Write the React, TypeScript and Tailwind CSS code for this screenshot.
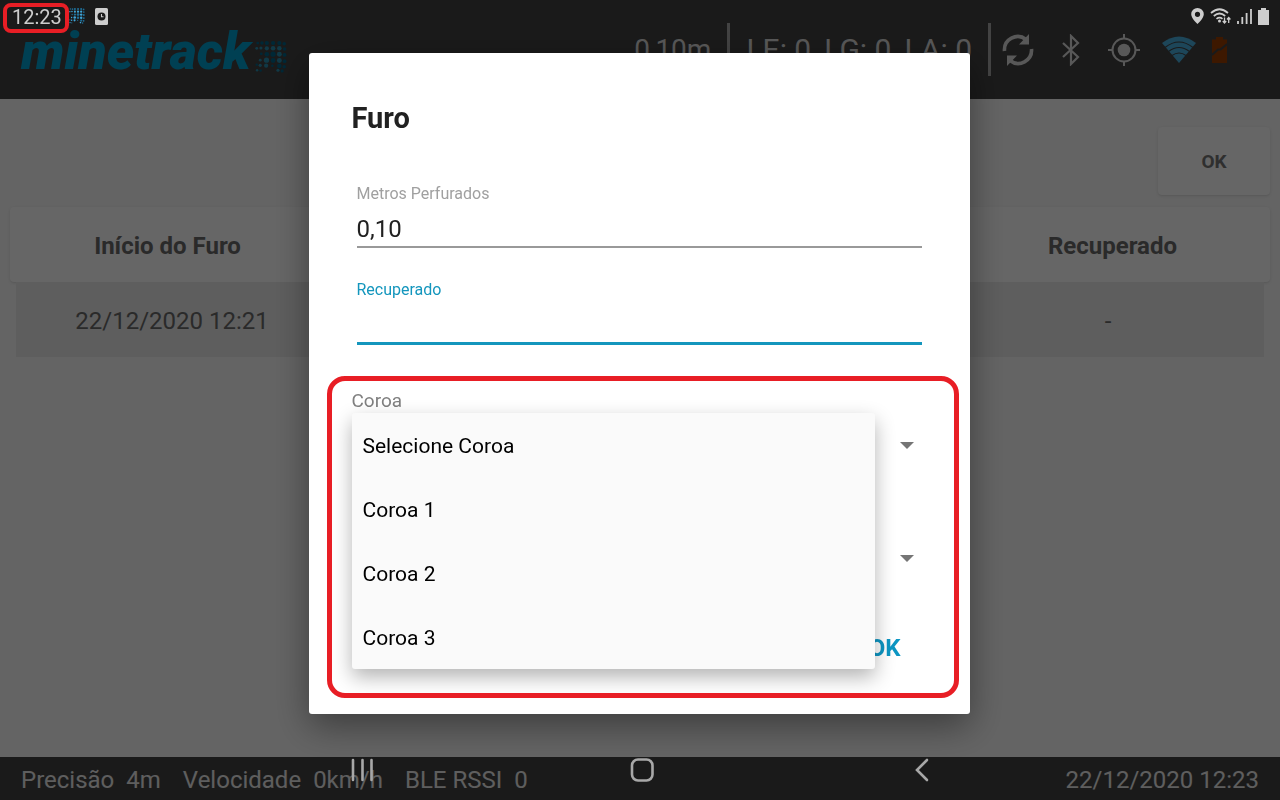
import React from 'react';

// x, y, radius, brightness
const DOTS: [number, number, number, number][] = [
  [8, 6, 4, 0], [20, 6, 5, 0], [34, 6, 6, 0], [52, 6, 6, 0], [70, 6, 6, 0], [84, 8, 5, 0],
  [5, 21, 4, 1], [17, 20, 4.5, 1], [34, 21, 6, 1], [52, 21, 6.5, 1], [70, 21, 6.5, 1], [85, 23, 5, 0],
  [18, 37, 4, 0], [34, 38, 6.5, 0], [52, 38, 7.5, 0], [70, 38, 7, 1], [85, 40, 5.5, 0],
  [15, 55, 4, 1], [33, 55, 7.5, 1], [52, 56, 7, 0], [70, 56, 7, 1], [85, 58, 5.5, 0],
  [5, 68, 3.5, 0], [15, 70, 4.5, 1], [32, 71, 6, 1], [50, 71, 3.5, 0], [70, 72, 6.5, 0], [84, 74, 5, 0],
  [6, 84, 3.5, 1], [16, 85, 3.5, 0], [66, 84, 4.5, 1], [78, 86, 4.5, 0],
];

const DotArrow: React.FC<{ className: string; fill: string; accent: string }> = ({ className, fill, accent }) => (
  <svg viewBox="0 0 92 92" className={className} aria-hidden="true">
    {DOTS.map(([x, y, r, bright]) => (
      <circle key={`${x}-${y}`} cx={x} cy={y} r={r} fill={bright ? accent : fill} />
    ))}
  </svg>
);

const StatusBar = () => (
  <div className="fixed inset-x-0 top-0 z-40 flex h-8 items-center justify-between pl-3 pr-[11px] text-[#cdcdcd]">
    <div className="flex items-center">
      <time className="pt-0.5 text-[20px] leading-6">12:23</time>
      <DotArrow className="ml-[7px] h-4 w-4" fill="#1f6f98" accent="#3fa5d8" />
      <svg viewBox="0 0 13 17" className="ml-2.5 h-[17px] w-[13px]" aria-hidden="true">
        <rect width="13" height="17" rx="1.5" fill="currentColor" />
        <circle cx="6.5" cy="8.5" r="4" fill="#1a1a1a" />
        <path d="M6.5 6v2.7h2" fill="none" stroke="#cdcdcd" strokeWidth="1.1" />
      </svg>
    </div>
    <div className="flex items-center">
      <svg viewBox="0 0 13 16" className="h-4 w-[13px]" aria-hidden="true">
        <path
          fill="currentColor"
          fillRule="evenodd"
          d="M6.5 0A6.3 6.3 0 0 0 .2 6.3C.2 10.5 6.500 16 6.5 16S12.800 10.5 12.8 6.3A6.3 6.3 0 0 0 6.5 0zm0 3.700a2.600 2.600 0 1 1 0 5.200 2.600 2.600 0 0 1 0-5.200z"
        />
      </svg>
      <svg viewBox="0 0 22 18" className="ml-1.5 h-[18px] w-[22px]" aria-hidden="true">
        <g fill="none" stroke="currentColor" strokeWidth="1.7">
          <path d="M1 6Q9.5-1.5 18 6" />
          <path d="M3.8 9Q9.5 4 15.2 9" />
          <path d="M6.5 11.8Q9.5 9.5 12.5 11.8" />
        </g>
        <circle cx="9.5" cy="14" r="1.5" fill="currentColor" />
        <path d="M14.5 10.5v5M12.8 14l1.700 2 1.700-2M18.700 16v-5M17 12.500l1.700-2 1.700 2" fill="none" stroke="currentColor" strokeWidth="1.3" />
      </svg>
      <svg viewBox="0 0 15 16" className="ml-[5px] h-4 w-[15px]" aria-hidden="true">
        <path d="M1 16v-3M5.300 16V9M9.600 16V5M14 16V1" stroke="currentColor" strokeWidth="1.8" />
      </svg>
      <svg viewBox="0 0 11 17" className="ml-1.5 h-[17px] w-[11px]" aria-hidden="true">
        <path d="M3 0h5v2h3v15H0V2h3z" fill="currentColor" />
      </svg>
    </div>
  </div>
);

const SyncIcon = () => (
  <svg viewBox="0 0 32 32" className="h-8 w-8" aria-hidden="true">
    <g fill="none" stroke="currentColor" strokeWidth="3.6">
      <path d="M2.500 17A13.300 13.300 0 0 1 24 5.500" />
      <path d="M29.500 15A13.300 13.300 0 0 1 8 26.500" />
    </g>
    <path d="M27 0v10.500H17z M5 32V21.500h10z" fill="currentColor" />
  </svg>
);

const BluetoothIcon = () => (
  <svg viewBox="0 0 18 32" className="h-8 w-[18px]" aria-hidden="true">
    <path d="M1 9l15 14-7 7V2l7 7L1 23" fill="none" stroke="currentColor" strokeWidth="2.2" />
  </svg>
);

const LocateIcon = () => (
  <svg viewBox="0 0 32 32" className="h-8 w-8" aria-hidden="true">
    <circle cx="16" cy="16" r="11.5" fill="none" stroke="currentColor" strokeWidth="2" />
    <circle cx="16" cy="16" r="6.3" fill="currentColor" />
    <path d="M16 0v5M16 27v5M0 16h5M27 16h5" stroke="currentColor" strokeWidth="2" />
  </svg>
);

const WifiIcon = () => (
  <svg viewBox="0 0 34 27" className="h-[27px] w-[34px]" aria-hidden="true">
    <path d="M17 27L0 7Q17-6 34 7z" fill="#4aaede" />
    <g fill="none" stroke="#424242" strokeWidth="1.1">
      <path d="M3 11.500Q17 .5 31 11.500" />
      <path d="M6.500 15.500Q17 7.500 27.500 15.500" />
      <path d="M10 19.500Q17 14.500 24 19.500" />
    </g>
  </svg>
);

const BatteryOffIcon = () => (
  <svg viewBox="0 0 15 26" className="h-[26px] w-[15px]" aria-hidden="true">
    <path d="M4 0h7v2.500h4V26H0V2.500h4z" fill="#9a3c00" />
    <path d="M0 18L6 12.500H8.500L15 7" fill="none" stroke="#424242" strokeWidth="2.2" />
  </svg>
);

const Header = () => (
  <header className="flex h-[99px] items-center justify-between bg-[#424242] pl-[21px] pr-[53px] text-[#dcdcdc]">
    <div className="flex items-center gap-1 pt-1">
      <span className="text-[52px] font-black italic leading-10 text-[#00a0d0]">minetrack</span>
      <DotArrow className="mt-2.5 h-8 w-8" fill="#006488" accent="#2a8fb0" />
    </div>
    <div className="flex items-center leading-none">
      <span className="text-[28px]">0,10m</span>
      <span className="ml-4 h-[53px] w-[3px] bg-[#a8a8a8]" />
      <div className="ml-4 flex gap-[13px] text-[30px]">
        <span>LE: 0</span>
        <span>LG: 0</span>
        <span>LA: 0</span>
      </div>
      <span className="ml-4 h-[53px] w-[3px] bg-[#a8a8a8]" />
      <div className="ml-[11px] flex items-center">
        <SyncIcon />
        <span className="ml-7"><BluetoothIcon /></span>
        <span className="ml-7"><LocateIcon /></span>
        <span className="ml-[22px]"><WifiIcon /></span>
        <span className="ml-4"><BatteryOffIcon /></span>
      </div>
    </div>
  </header>
);

const HolesTable = () => (
  <table className="mt-3 block w-full text-[24px] text-[#6a6a6a]">
    <thead className="block">
      <tr className="grid h-[75px] grid-cols-4 items-center rounded-sm bg-white pt-0.5 shadow">
        <th className="font-bold">Início do Furo</th>
        <th />
        <th />
        <th className="font-bold">Recuperado</th>
      </tr>
    </thead>
    <tbody className="block px-1.5">
      <tr className="grid h-[75px] grid-cols-4 items-center bg-[#ebebeb] pt-0.5 text-center">
        <td>22/12/2020 12:21</td>
        <td />
        <td />
        <td>-</td>
      </tr>
    </tbody>
  </table>
);

const Footer = () => (
  <footer className="flex h-[43px] items-center justify-between bg-[#424242] px-[21px] pt-[3px] text-[24px] leading-10 text-[#ebebeb]">
    <div className="flex gap-[22px]">
      <span className="flex gap-3"><span>Precisão</span><span>4m</span></span>
      <span className="flex gap-3"><span>Velocidade</span><span>0km/h</span></span>
      <span className="flex gap-3"><span>BLE RSSI</span><span>0</span></span>
    </div>
    <time>22/12/2020 12:23</time>
  </footer>
);

const Caret = () => (
  <svg viewBox="0 0 14 7" className="pointer-events-none absolute right-2 top-[29px] h-[7px] w-[14px]" aria-hidden="true">
    <path d="M0 0h14L7 7z" fill="#757575" />
  </svg>
);

const COROAS = ['Selecione Coroa', 'Coroa 1', 'Coroa 2', 'Coroa 3'];

const FuroDialog = () => (
  <div role="dialog" aria-labelledby="furo-title" className="relative w-[661px] rounded-[3px] bg-white px-12 pb-[42px] pt-12 shadow-[0_12px_36px_rgba(0,0,0,0.4)]">
    <h1 id="furo-title" className="-ml-[5px] pt-px text-[29px] font-bold leading-8 text-[#212121]">Furo</h1>

    <label htmlFor="metros" className="mt-[50px] block text-[16px] leading-5 text-[#a0a0a0]">Metros Perfurados</label>
    <input
      id="metros"
      defaultValue="0,10"
      className="block h-11 w-full border-b-2 border-[#999999] pt-2 text-[24px] text-[#212121] outline-none"
    />

    <label htmlFor="recuperado" className="mt-8 block text-[16px] leading-5 text-[#1496bd]">Recuperado</label>
    <input
      id="recuperado"
      className="block h-[45px] w-full border-b-3 border-[#1496bd] pt-2 text-[24px] text-[#212121] outline-none"
    />

    <div className="relative -ml-[5px] mt-11">
      <label htmlFor="coroa" className="block text-[19px] leading-6 text-[#808080]">Coroa</label>
      <div className="relative">
        <select id="coroa" className="block h-16 w-full appearance-none pl-3 text-[21px]">
          {COROAS.map((coroa) => <option key={coroa}>{coroa}</option>)}
        </select>
        <Caret />
        <ul className="absolute left-0 top-0 z-10 w-[523px] rounded-[3px] bg-[#fafafa] text-[21px] leading-6 text-black shadow-[0_8px_20px_rgba(0,0,0,0.3)]">
          {COROAS.map((coroa) => (
            <li key={coroa} className="flex h-16 items-center px-[11px] pt-0.5">{coroa}</li>
          ))}
        </ul>
      </div>
      <div className="relative mt-[49px]">
        <select aria-label="Caixa" className="block h-16 w-full appearance-none pl-3 text-[21px]" />
        <Caret />
      </div>
    </div>

    <div className="mt-[34px] flex justify-end pr-[21px]">
      <button className="h-12 text-[24px] font-bold text-[#0d96c3]">OK</button>
    </div>

    <div className="pointer-events-none absolute bottom-4 left-[18px] right-[11px] top-[323px] z-20 rounded-[18px] border-5 border-[#e81e25]" />
  </div>
);

const NavBar = () => (
  <nav className="fixed inset-x-0 bottom-0 z-40 flex h-[42px] items-start justify-center gap-64 pl-1 text-[#a8a8a8]">
    <button aria-label="Recentes" className="flex h-6 w-6 items-center justify-center">
      <svg viewBox="0 0 24 24" className="h-6 w-6">
        <path d="M3 2v20M12.500 2v20M21.500 2v20" stroke="currentColor" strokeWidth="2.6" strokeLinecap="round" />
      </svg>
    </button>
    <button aria-label="Início" className="flex h-6 w-6 items-center justify-center">
      <svg viewBox="0 0 24 24" className="h-6 w-6">
        <rect x="2" y="1.500" width="20.500" height="21" rx="6" fill="none" stroke="currentColor" strokeWidth="2.600" />
      </svg>
    </button>
    <button aria-label="Voltar" className="flex h-6 w-6 items-center justify-center">
      <svg viewBox="0 0 24 24" className="h-6 w-6">
        <path d="M17 2L7 12l10 10" fill="none" stroke="currentColor" strokeWidth="2.600" strokeLinecap="round" />
      </svg>
    </button>
  </nav>
);

export default function App() {
  return (
    <div className="min-h-screen font-[Roboto,sans-serif]">
      <div className="flex min-h-screen flex-col bg-[#f9f9f9]">
        <Header />
        <main className="flex-1 px-2.5 pt-7">
          <div className="flex justify-end">
            <button className="h-[68px] w-28 rounded-sm bg-[#fefefe] pt-0.5 text-[19px] font-bold text-[#767676] shadow">OK</button>
          </div>
          <HolesTable />
        </main>
        <Footer />
      </div>

      <div className="fixed inset-0 z-30 flex items-start justify-center bg-black/60 pr-0.5 pt-[53px]">
        <FuroDialog />
      </div>

      <StatusBar />
      <div className="pointer-events-none fixed left-[3px] top-[3px] z-50 h-[30px] w-[66px] rounded-lg border-4 border-[#e81e25]" />
      <NavBar />
    </div>
  );
}
